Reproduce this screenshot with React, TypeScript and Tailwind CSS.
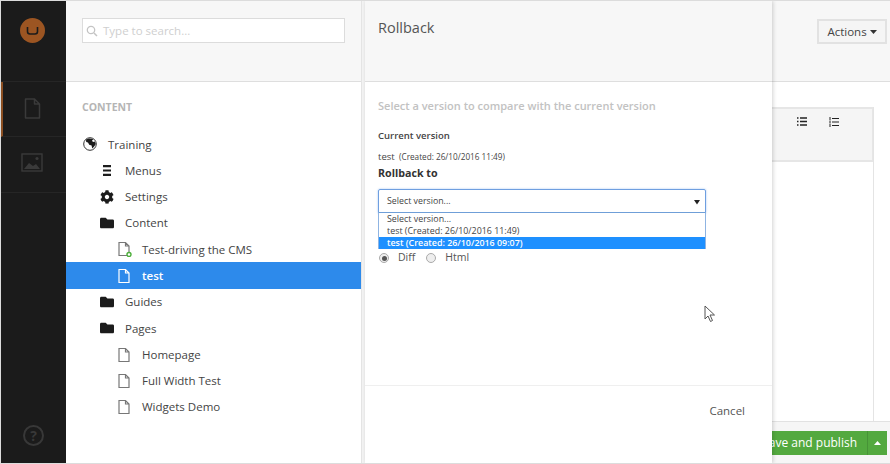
import React from 'react';
import { FaCog, FaFolder } from 'react-icons/fa';

const OPEN = "font-['Open_Sans',sans-serif]";

function PageIcon({ className = 'text-[#777]', dot = false }: { className?: string; dot?: boolean }) {
  return (
    <svg width="16" height="16" viewBox="0 0 16 16" className={className}>
      <path d="M3 1.5h6.5L13 5v9.5H3z M9.5 1.5V5H13" fill="none" stroke="currentColor" strokeWidth="1.2" />
      {dot && <circle cx="13" cy="13.5" r="2" fill="#fff" stroke="#4caf3a" strokeWidth="1.4" />}
    </svg>
  );
}

function GlobeIcon() {
  return (
    <svg width="14" height="14" viewBox="0 0 14 14">
      <circle cx="7" cy="7" r="6.3" fill="#fff" stroke="#333" strokeWidth="1" />
      <path d="M3 2.6l3-1.2 4.4.6L9 3.8 10 5l1.8-.6 1 2.6-1.6 2.6-2 2-.6-3.2-2.4-.6L5 5.6 3.2 5z" fill="#1c1c1c" />
    </svg>
  );
}

function TreeRow({
  icon, label, indent, selected,
}: { icon: React.ReactNode; label: string; indent: 'root' | 'one' | 'two'; selected?: boolean }) {
  const pad = indent === 'root' ? 'pl-[16px] gap-[10px]' : indent === 'one' ? 'pl-[33px] gap-[10px]' : 'pl-[50px] gap-[10px]';
  return (
    <div className={`flex items-center h-[26.3px] text-[11.5px] ${pad} ${selected ? 'bg-[#2d8aeb] text-white font-semibold' : 'text-[#444]'}`}>
      <span className="w-[16px] flex justify-center shrink-0">{icon}</span>
      <span>{label}</span>
    </div>
  );
}

export default function App() {
  return (
    <div className={`${OPEN} relative flex w-[890px] h-[464px] overflow-hidden bg-white border-t border-b border-l border-[#dcdcdc]`}>
      {/* SECTIONS */}
      <div className="w-[65px] shrink-0 bg-[#1b1b1b] flex flex-col">
        <div className="h-[81px] flex justify-center pt-[17px] pr-[2px] border-b border-[#262626]">
          <div className="w-[25px] h-[25px] rounded-full bg-[#9c5522] flex items-center justify-center">
            <svg width="13" height="10" viewBox="0 0 13 10">
              <path d="M1.5 1v4.5a2.5 2.5 0 0 0 2.5 2.5h5a2.5 2.5 0 0 0 2.5-2.5V1" fill="none" stroke="#1b1b1b" strokeWidth="1.6" />
            </svg>
          </div>
        </div>
        <div className="h-[55px] flex items-center justify-center pr-[5px] pb-[2px] border-l-2 border-[#8c4f22] border-b border-b-[#262626]">
          <svg width="17" height="21" viewBox="0 0 17 21">
            <path d="M1.5 1h9L15.5 6v14h-14z M10.5 1v5h5" fill="none" stroke="#3a3a3a" strokeWidth="1.5" strokeLinejoin="round" />
          </svg>
        </div>
        <div className="h-[56px] flex items-center justify-center pr-[3px] pb-[4px] border-b border-[#262626]">
          <svg width="22" height="19" viewBox="0 0 22 19">
            <rect x="1" y="1" width="20" height="17" fill="none" stroke="#3a3a3a" strokeWidth="1.4" />
            <path d="M3 16l5-6 4 3 3-2 4 5z" fill="#3a3a3a" />
            <circle cx="16" cy="5.5" r="1.6" fill="#3a3a3a" />
          </svg>
        </div>
        <div className="mt-auto pb-[17px] flex justify-center">
          <div className="w-[21px] h-[21px] rounded-full border-2 border-[#383838] flex items-center justify-center text-[14px] font-bold text-[#383838]">?</div>
        </div>
      </div>

      {/* TREE */}
      <div className="w-[295px] shrink-0 flex flex-col">
        <div className="h-[81px] bg-[#f7f7f7] border-b border-[#dedede] pt-[17px] px-[16px]">
          <div className="w-[263px] h-[25px] bg-white border border-[#dcdcdc] flex items-center pl-[3px] gap-[5px]">
            <svg width="12" height="12" viewBox="0 0 12 12">
              <circle cx="5" cy="5" r="3.7" fill="none" stroke="#c4c4c4" strokeWidth="1.3" />
              <path d="M8 8l3 3" stroke="#c4c4c4" strokeWidth="1.5" />
            </svg>
            <span className="text-[11.5px] text-[#cfcfcf]">Type to search...</span>
          </div>
        </div>
        <div className="pt-[18px] px-[16px] text-[10.5px] font-bold text-[#b5b5b5] h-[49px] leading-[14px]">CONTENT</div>
        <TreeRow indent="root" label="Training" icon={<GlobeIcon />} />
        <TreeRow indent="one" label="Menus" icon={
          <svg width="10" height="11" viewBox="0 0 10 11"><path d="M1 0h8v2.2H1zM1 4.4h8v2.2H1zM1 8.8h8V11H1z" fill="#1c1c1c" /></svg>
        } />
        <TreeRow indent="one" label="Settings" icon={<FaCog size={14} className="text-[#1c1c1c]" />} />
        <TreeRow indent="one" label="Content" icon={<FaFolder size={14} className="text-[#1c1c1c]" />} />
        <TreeRow indent="two" label="Test-driving the CMS" icon={<PageIcon dot />} />
        <TreeRow indent="two" label="test" selected icon={<PageIcon className="text-white" />} />
        <TreeRow indent="one" label="Guides" icon={<FaFolder size={14} className="text-[#1c1c1c]" />} />
        <TreeRow indent="one" label="Pages" icon={<FaFolder size={14} className="text-[#1c1c1c]" />} />
        <TreeRow indent="two" label="Homepage" icon={<PageIcon />} />
        <TreeRow indent="two" label="Full Width Test" icon={<PageIcon />} />
        <TreeRow indent="two" label="Widgets Demo" icon={<PageIcon />} />
      </div>

      {/* GUTTER */}
      <div className="w-[4px] shrink-0 bg-[#f4f4f4] border-l border-[#e4e4e4]" />

      {/* ROLLBACK */}
      <div className="relative z-10 w-[407px] shrink-0 bg-white flex flex-col shadow-[1px_0_4px_rgba(0,0,0,0.18)]">
        <div className="h-[81px] bg-[#f7f7f7] border-b border-[#dedede] pt-[16px] px-[13px] text-[14.5px] leading-[22px] text-[#555]">Rollback</div>
        <div className="flex-1 px-[13px] relative">
          <div className="pt-[16px] text-[11px] font-semibold text-[#c2c2c2] leading-[16px]">
            Select a version to compare with the current version
          </div>
          <div className="mt-[15px] text-[9.5px] font-semibold text-[#444] leading-[14px]">Current version</div>
          <div className="mt-[8px] text-[9.5px] text-[#444] leading-[12px]">
            test <span className="text-[8.2px] ml-[2px]">(Created: 26/10/2016 11:49)</span>
          </div>
          <div className="mt-[2px] text-[10.7px] font-bold text-[#333] leading-[16px]">Rollback to</div>
          <div className="mt-[8px] w-[328px] h-[25px] border border-[#6f9fe0] rounded-[2px] shadow-[0_0_2px_rgba(82,150,236,0.6)] flex items-center justify-between pl-[8px] pr-[5px] text-[8.8px] text-[#444]">
            <span>Select version...</span>
            <svg width="6" height="6" viewBox="0 0 6 6"><path d="M0 1h6L3 5.5z" fill="#222" /></svg>
          </div>
          <div className="mt-[37px] flex items-center text-[10.5px] leading-[12px] text-[#555] h-[14px]">
            <span className="ml-[1px] w-[10px] h-[10px] rounded-full border border-[#aaa] bg-[#eee] flex items-center justify-center">
              <span className="w-[5px] h-[5px] rounded-full bg-[#555]" />
            </span>
            <span className="ml-[9px] -mt-[2px]">Diff</span>
            <span className="ml-[11px] w-[10px] h-[10px] rounded-full border border-[#aaa] bg-[#eee]" />
            <span className="ml-[9px] -mt-[2px]">Html</span>
          </div>

          {/* open select list */}
          <div className="absolute left-[13px] top-[130px] w-[328px] bg-white border-x border-[#8fb4e2] border-t border-t-[#6f9fd8] text-[8.9px] text-[#444] leading-[12px] z-20">
            <div className="pl-[8px]">Select version...</div>
            <div className="pl-[8px]">test (Created: 26/10/2016 11:49)</div>
            <div className="pl-[8px] bg-[#1e90ff] text-white font-semibold">test (Created: 26/10/2016 09:07)</div>
          </div>

          {/* mouse pointer */}
          <svg width="12" height="18" viewBox="0 0 12 18" className="absolute left-[339px] top-[223px]">
            <path d="M1 1v13l3-3 2.5 5.5 2-1L6 10h4.5z" fill="#fff" stroke="#555" strokeWidth="1" />
          </svg>
        </div>
        <div className="h-[78px] border-t border-[#efefef] flex justify-end pt-[16px] pr-[27px] text-[11.5px] text-[#555]">Cancel</div>
      </div>

      {/* EDITOR BEHIND */}
      <div className="flex-1 min-w-0 flex flex-col">
        <div className="h-[81px] bg-[#f7f7f7] border-b border-[#dedede] flex justify-end items-start pt-[18px] pr-[3px] shrink-0">
          <div className="w-[70px] h-[25px] bg-[#f5f5f5] border-2 border-[#e2e2e2] flex items-center justify-center gap-[3px] text-[11.5px] text-[#444]">
            Actions
            <svg width="7" height="4" viewBox="0 0 7 4"><path d="M0 0h7L3.5 4z" fill="#333" /></svg>
          </div>
        </div>
        <div className="flex-1 pt-[25px] pr-[16px]">
          <div className="h-[314px] border-r border-[#e4e4e4] flex flex-col">
            <div className="h-[55px] bg-[#f5f5f5] border-y-2 border-r border-[#e6e6e6] flex items-start pt-[5px] pl-[25px] gap-[22px] text-[#222]">
              <svg width="10" height="9" viewBox="0 0 10 9" className="mt-[3px]"><path d="M3 1h7M3 4.5h7M3 8h7" stroke="#222" strokeWidth="1.3" /><path d="M0 1h1.5M0 4.5h1.5M0 8h1.5" stroke="#222" strokeWidth="1.5" /></svg>
              <svg width="10" height="10" viewBox="0 0 10 10" className="mt-[3px]"><path d="M3 1.5h7M3 5h7M3 8.5h7" stroke="#222" strokeWidth="1" /><path d="M1 0v3M1 3.5v3M1 7v3" stroke="#222" strokeWidth="1" /></svg>
            </div>
          </div>
        </div>
        <div className="h-[42px] shrink-0 bg-[#f6f6f6] border-t border-[#e2e2e2] flex justify-end items-start pt-[9px] pr-[3px]">
          <div className="shrink-0 flex h-[24px] bg-[#53a93f] text-white text-[12px] items-center">
            <span className="pl-[14px] pr-[10px] whitespace-nowrap shrink-0">Save and publish</span>
            <span className="w-[20px] h-full flex items-center justify-center border-l border-[#479337]">
              <svg width="7" height="4" viewBox="0 0 7 4"><path d="M0 4h7L3.5 0z" fill="#fff" /></svg>
            </span>
          </div>
        </div>
      </div>
    </div>
  );
}
